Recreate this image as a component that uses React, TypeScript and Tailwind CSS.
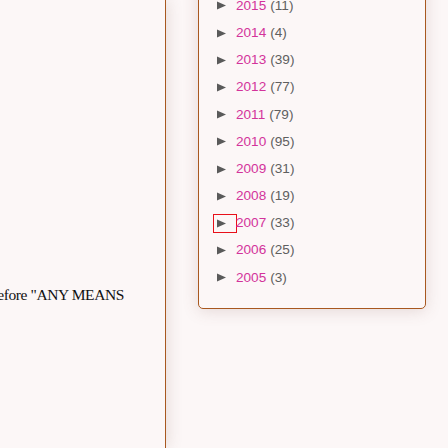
import React from "react";

const years: [string, number][] = [
  ["2015", 11],
  ["2014", 4],
  ["2013", 39],
  ["2012", 77],
  ["2011", 79],
  ["2010", 95],
  ["2009", 31],
  ["2008", 19],
  ["2007", 33],
  ["2006", 25],
  ["2005", 3],
];

function Tri() {
  return (
    <svg width="9" height="9" viewBox="0 0 9 9">
      <polygon points="0,0.5 9,4.5 0,8.5" fill="#5a5a5a" />
    </svg>
  );
}

export default function App() {
  return (
    <div className="flex h-[448px] w-[448px] overflow-hidden bg-[#fcf7f7]">
      <div className="relative z-10 h-full w-[166px] shrink-0 overflow-hidden border-r border-[#a8581f] bg-[#fcf7f7] pt-[284px] shadow-[2px_0_14px_rgba(120,80,70,0.16)]">
        <div
          className="flex w-[124px] justify-end whitespace-nowrap text-[15.5px] leading-[22px] tracking-[-0.4px] text-[#111]"
          style={{ fontFamily: '"Liberation Serif", "DejaVu Serif", serif' }}
        >
          before "ANY MEANS
        </div>
      </div>
      <div className="flex-1 pl-[32px]">
        <div
          className="mt-[-20px] w-[228px] rounded-b-[5px] border border-[#a8581f] bg-[#fcf7f7] pb-[17px] pt-[11.4px] shadow-[0_2px_16px_rgba(120,80,70,0.18)]"
          style={{ fontFamily: '"Liberation Sans", Arial, sans-serif' }}
        >
          {years.map(([y, n]) => (
            <div key={y} className="flex h-[27.2px] items-center pl-[15px] text-[13.6px]">
              <span
                className={
                  "flex h-[17px] w-[22px] items-center pl-[3px] " +
                  (y === "2007" ? "outline outline-1 outline-[#e8101a]" : "")
                }
              >
                <Tri />
              </span>
              <span className="text-[#d3339b]">{y}</span>
              <span className="ml-[4px] text-[#5f5f5f]">({n})</span>
            </div>
          ))}
        </div>
      </div>
    </div>
  );
}
